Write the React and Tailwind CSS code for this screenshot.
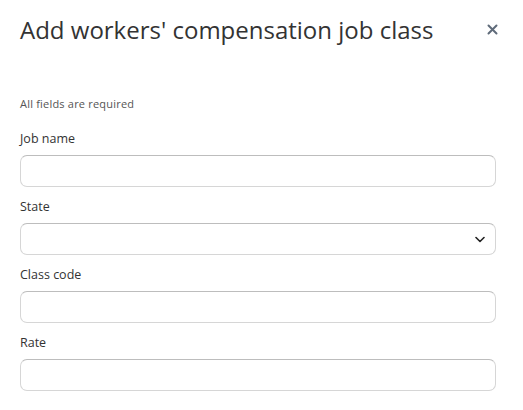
import React from "react";

function Field({ label, select }) {
  return (
    <div className="flex flex-col">
      <label className="text-[12.5px] leading-[16px] text-[#333] mb-[8px]">{label}</label>
      <div className="relative h-[32px] w-full rounded-[7px] border border-[#d6d6d6] border-t-[#bdbdbd] bg-white">
        {select && (
          <svg className="absolute right-[10px] top-[12px]" width="10" height="7" viewBox="0 0 10 7" fill="none">
            <path d="M1 1.5 L5 5.5 L9 1.5" stroke="#222" strokeWidth="1.6" strokeLinecap="round" strokeLinejoin="round" />
          </svg>
        )}
      </div>
    </div>
  );
}

export default function App() {
  return (
    <div className="w-[523px] h-[410px] bg-white px-[20px] pt-[14px]" style={{ fontFamily: '"Open Sans", sans-serif' }}>
      <div className="flex items-start justify-between">
        <h1 className="text-[24px] leading-[32px] text-[#333] font-normal">Add workers' compensation job class</h1>
        <button className="mt-[10px] mr-[5px]">
          <svg width="11" height="11" viewBox="0 0 11 11">
            <path d="M1.5 1.5 L9.5 9.5 M9.5 1.5 L1.5 9.5" stroke="#5f6b7a" strokeWidth="2" strokeLinecap="round" />
          </svg>
        </button>
      </div>
      <p className="mt-[51px] text-[11px] leading-[14px] tracking-[0.2px] text-[#555]">All fields are required</p>
      <div className="mt-[20px] flex w-[476px] flex-col gap-[12px]">
        <Field label="Job name" />
        <Field label="State" select />
        <Field label="Class code" />
        <Field label="Rate" />
      </div>
    </div>
  );
}
